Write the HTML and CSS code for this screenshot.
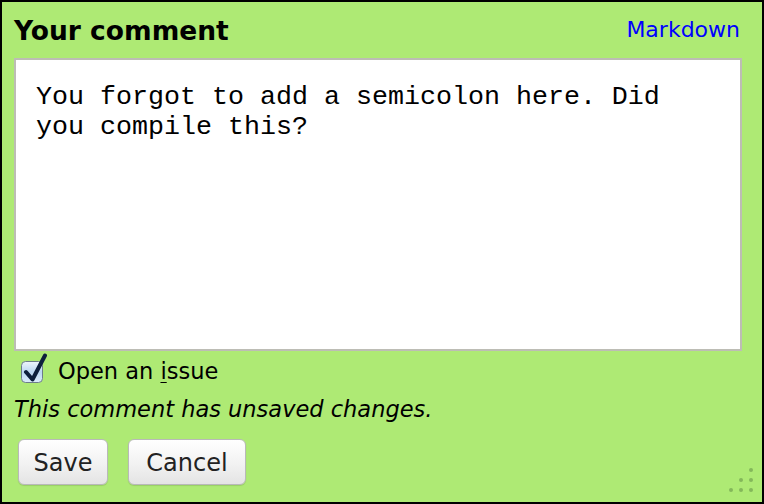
FILE: index.html
```html
<!DOCTYPE html>
<html>
<head>
<meta charset="utf-8">
<link rel="stylesheet" href="styles.css">
</head>
<body>
<form class="comment-box">
  <div class="header">
    <h1 class="title">Your comment</h1>
    <a class="md-link" href="#">Markdown</a>
  </div>
  <textarea class="editor" spellcheck="false">You forgot to add a semicolon here. Did you compile this?</textarea>
  <label class="issue">
    <span class="check">
      <svg width="28" height="30" viewBox="0 0 28 30">
        <defs>
          <linearGradient id="cb" x1="0" y1="0" x2="0" y2="1">
            <stop offset="0" stop-color="#eef5fc"/>
            <stop offset="0.5" stop-color="#bcd8f2"/>
            <stop offset="1" stop-color="#dcecfb"/>
          </linearGradient>
        </defs>
        <rect x="1.5" y="8.5" width="21" height="21" rx="4" fill="url(#cb)" stroke="#6c7c8a"/>
        <path d="M6 19 L12.5 26.5 L25 2.5" fill="none" stroke="#0d1f3c" stroke-width="4" stroke-linecap="round" stroke-linejoin="round"/>
      </svg>
    </span>
    <span class="issue-text">Open an <u>i</u>ssue</span>
  </label>
  <p class="status">This comment has unsaved changes.</p>
  <div class="actions">
    <button type="button" class="btn btn-save">Save</button>
    <button type="button" class="btn btn-cancel">Cancel</button>
  </div>
  <span class="grip" aria-hidden="true">
    <i class="d d1"></i><i class="d d2"></i><i class="d d3"></i>
    <i class="d d4"></i><i class="d d5"></i><i class="d d6"></i>
  </span>
</form>
</body>
</html>
```

FILE: styles.css
```css
html, body {
  margin: 0;
  padding: 0;
}
body {
  width: 764px;
  height: 504px;
  overflow: hidden;
  font-family: "DejaVu Sans", Verdana, sans-serif;
}
.comment-box {
  position: relative;
  box-sizing: border-box;
  width: 764px;
  height: 504px;
  border: 2px solid #000;
  background: #aeea74;
  padding: 0 20px 0 12px;
  display: flex;
  flex-direction: column;
}
.header {
  display: flex;
  justify-content: space-between;
  align-items: flex-start;
  height: 56px;
  padding-top: 14px;
  box-sizing: border-box;
}
.title {
  margin: 0;
  font-size: 26.5px;
  font-weight: bold;
  color: #000;
  line-height: 30px;
}
.md-link {
  font-size: 22px;
  line-height: 26px;
  color: #0000ff;
  text-decoration: none;
  margin-right: 2px;
  margin-top: 1px;
}
.editor {
  display: block;
  box-sizing: border-box;
  width: 728px;
  height: 293px;
  margin: 0;
  border: 2px solid #bdbdb5;
  background: #fff;
  padding: 22px 40px 22px 20px;
  font-family: "Liberation Mono", "Courier New", monospace;
  font-size: 26.67px;
  line-height: 30px;
  color: #000;
  resize: none;
  overflow: hidden;
  outline: none;
}
.issue {
  display: flex;
  align-items: center;
  height: 40px;
  padding-left: 6px;
  gap: 10px;
  font-size: 22.5px;
  color: #000;
}
.check {
  display: block;
  width: 28px;
  height: 30px;
  margin-top: -6px;
}
.check svg {
  display: block;
}
.issue-text u {
  text-decoration-thickness: 1px;
  text-underline-offset: 3px;
}
.status {
  margin: 0;
  height: 36px;
  line-height: 36px;
  font-size: 22.5px;
  font-style: italic;
  color: #000;
}
.actions {
  display: flex;
  gap: 20px;
  padding-left: 4px;
  padding-top: 12px;
}
.btn {
  box-sizing: border-box;
  height: 46px;
  border: 1px solid #b9b9b9;
  border-radius: 6px;
  background: linear-gradient(#ffffff, #f3f3f3 50%, #e4e4e4);
  font-family: "DejaVu Sans", Verdana, sans-serif;
  font-size: 24px;
  color: #222;
  padding: 2px 0 0;
  box-shadow: 0 1px 1px rgba(0,0,0,0.12);
}
.btn-save { width: 90px; }
.btn-cancel { width: 118px; }
.grip {
  position: absolute;
  right: 9px;
  bottom: 10px;
  width: 30px;
  height: 30px;
}
.d {
  position: absolute;
  width: 4px;
  height: 4px;
  border-radius: 50%;
  background: #84b85a;
}
.d1 { left: 26px; top: 6px; }
.d2 { left: 16px; top: 16px; }
.d3 { left: 26px; top: 16px; }
.d4 { left: 6px; top: 26px; }
.d5 { left: 16px; top: 26px; }
.d6 { left: 26px; top: 26px; }
```
